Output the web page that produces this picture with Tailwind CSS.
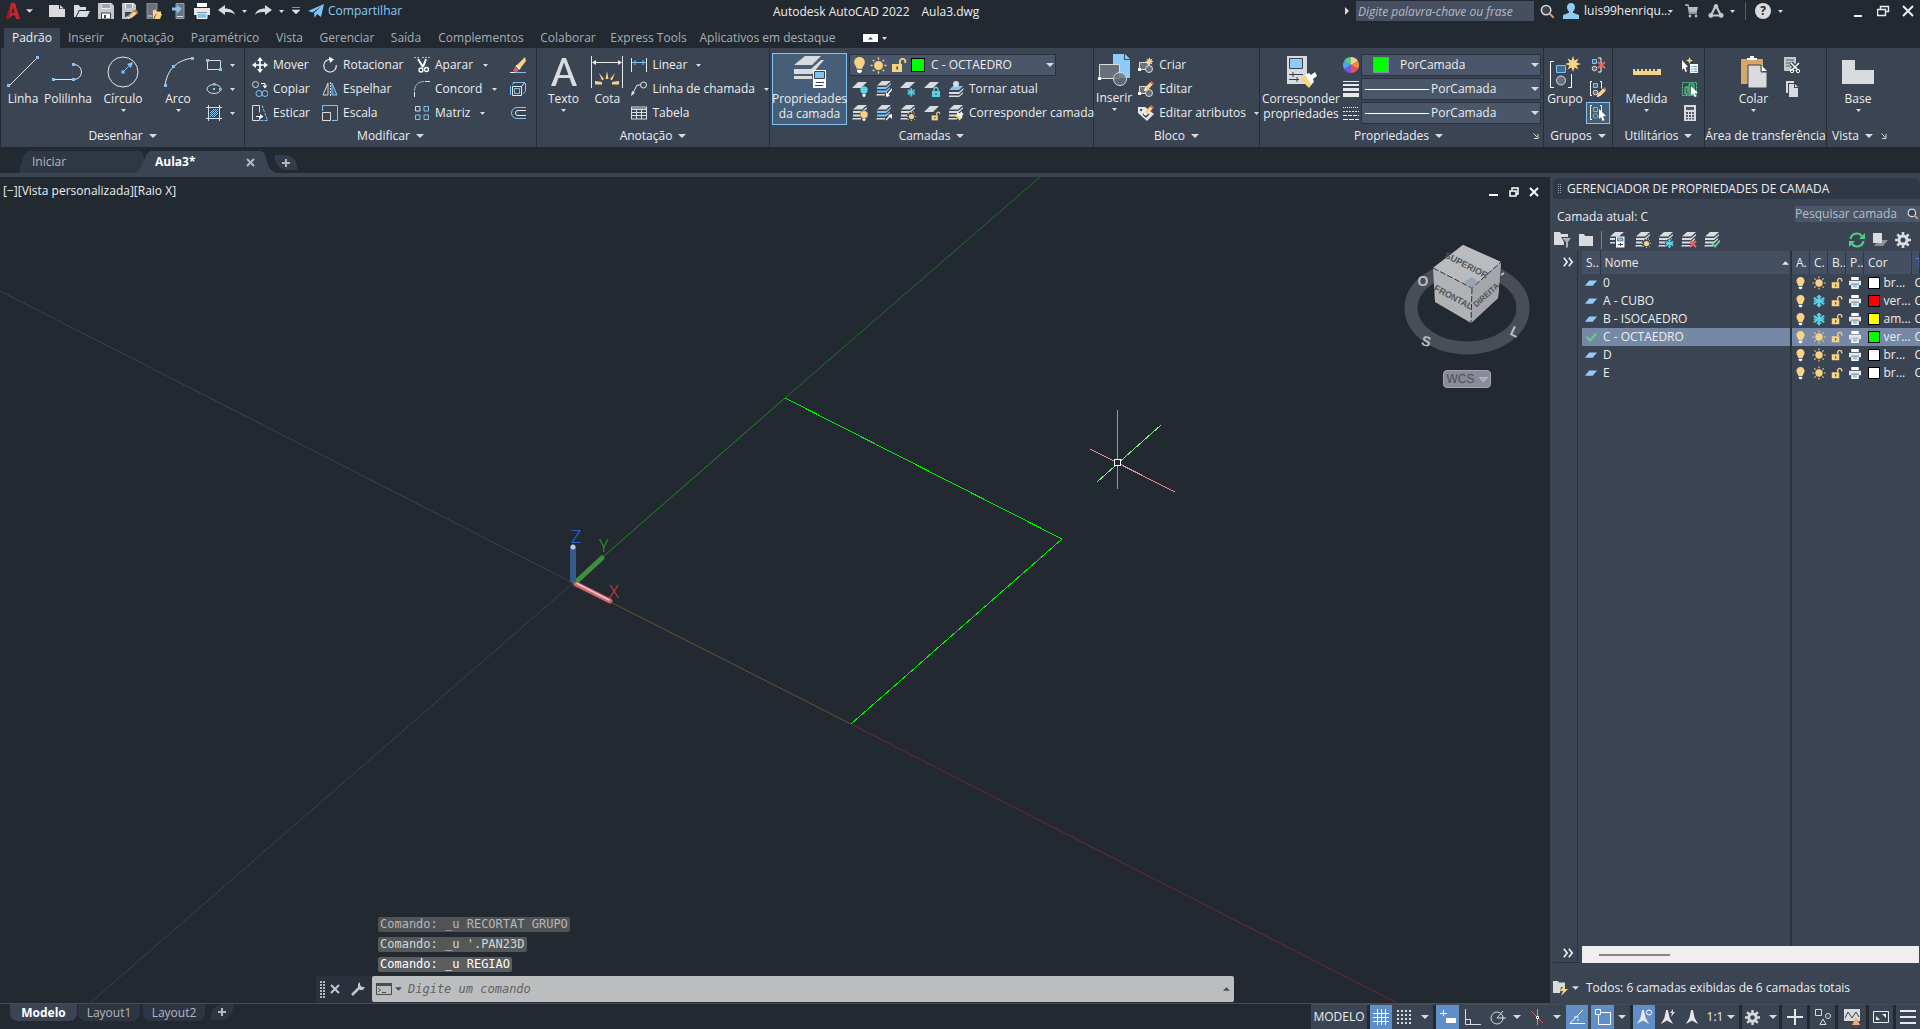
<!DOCTYPE html>
<html lang="pt-BR">
<head>
<meta charset="utf-8">
<title>Autodesk AutoCAD 2022 - Aula3.dwg</title>
<script src="https://cdn.jsdelivr.net/npm/@tailwindcss/browser@4"></script>
</head>
<body class="flex h-screen flex-col overflow-hidden bg-[#222931] font-['Open_Sans','Noto_Sans',sans-serif] text-xs whitespace-nowrap text-[#eceef0]">

<!-- Icon library -->
<svg class="hidden" aria-hidden="true">
  <defs>
    <symbol id="dn" viewBox="0 0 5 3"><path d="M0 0h5L2.500 3z" fill="#d9dbde"/></symbol>
    <symbol id="dnl" viewBox="0 0 8 4"><path d="M0 0h8L4 4z" fill="#d9dbde"/></symbol>
    <symbol id="launch" viewBox="0 0 6 6"><path d="M.5 .5l4 4M5 1v4.500H1" fill="none" stroke="#d9dbde"/></symbol>

    <symbol id="new" viewBox="0 0 17 16"><path d="M1 2h10v4h6v8H1z" fill="#d9dbde"/><path d="M12 2l4 3.500h-4z" fill="#d9dbde"/></symbol>
    <symbol id="open" viewBox="0 0 17 16"><path d="M1 14V2h5l1 2h6v3H6L2.500 14zM6.500 8H17l-3 6H3.500z" fill="#d9dbde"/></symbol>
    <symbol id="save" viewBox="0 0 16 16"><path d="M0 0h13.500L16 2.500V16H0z" fill="#c4c6c9"/><path d="M3.500 0h9v6h-9z" fill="#eceef0"/><path d="M4 2h8M4 4h8" stroke="#596270"/><path d="M3.500 10h9v6h-9z" fill="#fff" stroke="#39414e"/><path d="M6 12h2v3H6z" fill="#39414e"/></symbol>
    <symbol id="saveas" viewBox="0 0 16 16"><path d="M0 0h12l2 2v6l-8 8H0z" fill="#c4c6c9"/><path d="M3 0h8v5H3z" fill="#eceef0"/><path d="M4 2h6M4 4h6" stroke="#596270"/><path d="M3 9h6v1l-5 4H3z" fill="#39414e"/><path d="M6 16l1-4 6-5 3 3-6 5z" fill="#f8d384" stroke="#39414e" stroke-width=".7"/><path d="M12 8l3 3 1.500-2-2.500-2.500z" fill="#e0605e"/><path d="M5.500 16l1-2.500 1.500 2z" fill="#fff"/></symbol>
    <symbol id="openweb" viewBox="0 0 16 16"><path d="M1 0h10v7H7v9H1z" fill="#6b727d" stroke="#8d939b"/><path d="M2 13h4" stroke="#ddd"/><path d="M7 16V7h3l1 1.500h4V11h-5zM10.500 11H16l-2 5H8z" fill="#f8d384"/></symbol>
    <symbol id="saveweb" viewBox="0 0 16 16"><path d="M6 .5h8v15H6z" fill="#6b727d" stroke="#9a9fa6"/><path d="M7 13.500h6" stroke="#ddd"/><path d="M2 4.500h5V1.500L12 6l-5 4.500v-3H2z" fill="#7fc4f5"/></symbol>
    <symbol id="print" viewBox="0 0 16 16"><path d="M3 0h10v4H3z" fill="#fff"/><path d="M0 5h16v7h-3V9H3v3H0z" fill="#e6e8ea"/><path d="M3 10h10v5.500H3z" fill="#7fc4f5" stroke="#fff"/></symbol>
    <symbol id="undo" viewBox="0 0 17 12"><path d="M0 5L7 0v3.500c5 0 9 2 10 6.500-2.500-3-6-3-10-3V10z" fill="#d9dbde"/></symbol>
    <symbol id="plane" viewBox="0 0 16 16"><path d="M0 8L16 1l-3 13-4-3-2.500 4L6 10l7-6.500L4.500 9.500z" fill="#7fc4f5"/></symbol>
    <symbol id="mag" viewBox="0 0 16 16"><circle cx="6.500" cy="6.500" r="5" fill="#3a434f" stroke="#d9dbde" stroke-width="1.600"/><path d="M10.500 10.500l4 4" stroke="#e0a875" stroke-width="2"/></symbol>
    <symbol id="user" viewBox="0 0 16 16"><path d="M8 0c2.600 0 4 1.800 4 4 0 2-.8 3.500-2 4.500v1.200L16 12v4H0v-4l6-2.300V8.500C4.800 7.500 4 6 4 4c0-2.200 1.400-4 4-4z" fill="#8fcbf7"/></symbol>
    <symbol id="cart" viewBox="0 0 14 14"><path d="M0 1h3l1.500 8H12" fill="none" stroke="#b9bcc0" stroke-width="1.300"/><path d="M3.500 3H13l-1.300 5H4.500z" fill="#b9bcc0"/><circle cx="5" cy="12" r="1.400" fill="#b9bcc0"/><circle cx="11" cy="12" r="1.400" fill="#b9bcc0"/></symbol>
    <symbol id="apps" viewBox="0 0 16 14"><path d="M7.800 1.500L3 11.500l10 0z" fill="none" stroke="#c4c6c9" stroke-width="2.200"/><circle cx="8" cy="2.500" r="2.300" fill="#c4c6c9"/><circle cx="2.800" cy="11.500" r="2.400" fill="#c4c6c9"/><circle cx="13.200" cy="11.500" r="2.400" fill="#c4c6c9"/></symbol>

    <symbol id="move" viewBox="0 0 16 16"><path d="M8 2v12M2 8h12" stroke="#fff" stroke-width="1.600"/><path d="M8 0l3 4H5zM8 16l3-4H5zM0 8l4-3v6zM16 8l-4-3v6z" fill="#fff"/></symbol>
    <symbol id="copy" viewBox="0 0 16 16"><g fill="none"><circle cx="3.500" cy="3.500" r="3" stroke="#d9dbde"/><circle cx="7" cy="12.500" r="3" stroke="#7fc4f5"/><circle cx="13" cy="12.500" r="3" stroke="#7fc4f5"/><path d="M9 2.500h4v3" stroke="#fff"/></g><path d="M10.500 4.500h5L13 7.500z" fill="#fff"/></symbol>
    <symbol id="stretch" viewBox="0 0 16 16"><path d="M.5 .5h7v7M7.500 11v4.500h-7V.5" fill="none" stroke="#d9dbde"/><path d="M10 .5l5.500 15H8" fill="none" stroke="#7fc4f5" stroke-dasharray="3 1"/><path d="M4 11.500h4" stroke="#fff"/><path d="M8 9l3.500 2.500L8 14z" fill="#fff"/></symbol>
    <symbol id="rotate" viewBox="0 0 16 16"><path d="M9 2.500a6.300 6.300 0 1 0 5.300 5.500" fill="none" stroke="#e8eaec" stroke-width="1.200"/><path d="M7 -.5l5 3-4 3.500z" fill="#fff"/></symbol>
    <symbol id="mirror" viewBox="0 0 16 16"><path d="M6 2v12H1z" fill="none" stroke="#d9dbde"/><path d="M8.500 1v14" stroke="#d9dbde" stroke-dasharray="2 1"/><path d="M10 2l5 12h-5z" fill="#3f6b91" stroke="#7fc4f5"/></symbol>
    <symbol id="scale" viewBox="0 0 16 16"><path d="M.5 6V.5h15v15H10" fill="none" stroke="#7fc4f5"/><path d="M.5 7.500h8v8h-8z" fill="none" stroke="#d9dbde"/></symbol>
    <symbol id="trim" viewBox="0 0 16 16"><path d="M0 .5h6M8 .5h8" stroke="#7fc4f5" stroke-dasharray="2 1"/><path d="M4 2l5 8M12 2l-3 8" stroke="#fff" stroke-width="2"/><circle cx="7" cy="13" r="2" fill="none" stroke="#fff" stroke-width="1.300"/><circle cx="12.500" cy="12.500" r="2" fill="none" stroke="#fff" stroke-width="1.300"/></symbol>
    <symbol id="fillet" viewBox="0 0 16 16"><path d="M.5 16v-5M11 .5h5" stroke="#e8eaec"/><path d="M.5 10C.5 4 5 .5 10 .5" fill="none" stroke="#7fc4f5"/></symbol>
    <symbol id="array" viewBox="0 0 16 16"><g fill="none" stroke="#7fc4f5"><path d="M10 1.500h4.500V6H10zM1.500 10H6v4.500H1.500zM10 10h4.500v4.500H10z"/><path d="M1.500 1.500H6V6H1.500z" stroke="#d9dbde"/></g></symbol>
    <symbol id="erase" viewBox="0 0 16 16"><path d="M0 15.500h5" stroke="#e8eaec"/><path d="M5 15.500h11" stroke="#7fc4f5"/><path d="M6 9l9-9 1 4-7 9z" fill="#f8d384"/><path d="M5 9.500l4 3.500-2 2-4-.5z" fill="#e0605e"/><path d="M6 8.500l4 3.500" stroke="#fff" stroke-width="1.500"/></symbol>
    <symbol id="explode" viewBox="0 0 16 16"><g fill="none" stroke="#7fc4f5"><path d="M.5 14V5M3 1.500h12M15.500 2v8L13 13M2 3.500L5 1"/><path d="M2.500 5.500h9v9h-9zM11.500 5.500l3-3.500" stroke="#e8eaec"/><path d="M4.500 7.500h5v5h-5z"/></g></symbol>
    <symbol id="offset" viewBox="0 0 16 16"><path d="M16 2.500H7a5.500 5.500 0 0 0 0 11h9" fill="none" stroke="#7fc4f5"/><path d="M16 5.500H8a2.500 2.500 0 0 0 0 5h8" fill="none" stroke="#e8eaec"/></symbol>

    <symbol id="rect" viewBox="0 0 16 16"><path d="M1.500 3.500h13v9h-13z" fill="none" stroke="#d9dbde"/><path d="M0 2h3v3H0zM13 11h3v3h-3z" fill="#7fc4f5"/></symbol>
    <symbol id="ellipse" viewBox="0 0 16 16"><ellipse cx="8" cy="8" rx="7" ry="4.500" fill="none" stroke="#d9dbde"/><path d="M7 2h2.500v2.500H7zM13 7h2.500v2.500H13zM7 7h2v2H7z" fill="#7fc4f5"/></symbol>
    <symbol id="hatch" viewBox="0 0 16 16"><path d="M2.500 0v16M13.500 0v16M0 2.500h16M0 13.500h16" stroke="#d9dbde"/><path d="M4 8l4-4M4 12l8-8M8 12l4-4M4 10l6-6M6 12l6-6" stroke="#7fc4f5"/></symbol>

    <symbol id="linear" viewBox="0 0 16 16"><path d="M.5 1v14M15.500 1v14" stroke="#e8eaec"/><path d="M1 5.500h14M4 3v5M12 3v5" stroke="#7fc4f5"/></symbol>
    <symbol id="leader" viewBox="0 0 16 16"><circle cx="12.500" cy="4" r="3" fill="none" stroke="#e8eaec"/><path d="M9.500 4H6L2 12" fill="none" stroke="#e8eaec"/><path d="M0 15l1-5 3 2z" fill="#e8eaec"/></symbol>
    <symbol id="tbl" viewBox="0 0 16 16"><path d="M0 1.500h16v13H0z" fill="#d9dbde"/><path d="M1 5h4v2H1zM6 5h4v2H6zM11 5h4v2h-4zM1 8h4v2H1zM6 8h4v2H6zM11 8h4v2h-4zM1 11h4v2.500H1zM6 11h4v2.500H6zM11 11h4v2.500h-4zM1 2.500h14v1H1z" fill="#3b4453"/></symbol>

    <symbol id="bulb" viewBox="0 0 16 16"><path d="M8 0c3 0 5 2.200 5 5 0 2.400-2 3.800-2.500 6h-5C5 8.800 3 7.400 3 5c0-2.800 2-5 5-5z" fill="#f8d384"/><path d="M5.800 12h4.400v1.500L9 15H7l-1.200-1.500z" fill="#fff"/></symbol>
    <symbol id="sun" viewBox="0 0 16 16"><circle cx="8" cy="8" r="4.200" fill="#f8d384"/><path d="M8 .5v2M8 13.500v2M.5 8h2M13.500 8h2M2.700 2.700l1.400 1.400M11.900 11.900l1.400 1.400M2.700 13.300l1.400-1.400M11.900 4.100l1.400-1.400" stroke="#f8d384" stroke-width="1.300"/></symbol>
    <symbol id="unlock" viewBox="0 0 16 16"><path d="M1 7h10v8H1z" fill="#f8d384"/><path d="M9 7V4a2.700 2.700 0 0 1 5.300 0v2" fill="none" stroke="#f8d384" stroke-width="1.800"/><path d="M5.500 9.500h1.500v3H5.500z" fill="#39414e"/></symbol>
    <symbol id="snow" viewBox="0 0 16 16"><path d="M8 1v14M2 4.500l12 7M14 4.500l-12 7" stroke="#5cd3e6" stroke-width="2.200"/><path d="M5.500 2.500L8 5l2.500-2.500M5.500 13.500L8 11l2.500 2.500M2 8h12" fill="none" stroke="#5cd3e6" stroke-width="1.500"/></symbol>
    <symbol id="prn" viewBox="0 0 16 16"><path d="M3 0h10v4H3z" fill="#fff"/><path d="M0 5h16v6h-3V9H3v2H0z" fill="#e6e8ea"/><path d="M3 10h10v6H3z" fill="#fff"/><path d="M5 11h6v3H5z" fill="#7fc4f5"/></symbol>
    <symbol id="chip" viewBox="0 0 16 16"><path d="M6 5h9l-5 6H1z" fill="#8fcbf7"/></symbol>
    <symbol id="tick" viewBox="0 0 16 16"><path d="M3 8l4 4 7-8" fill="none" stroke="#5fd08f" stroke-width="2.400"/></symbol>

    <symbol id="one" viewBox="0 0 16 16"><path d="M6 1h9l-6 6H0z" fill="#d9dbde"/></symbol>
    <symbol id="stk" viewBox="0 0 16 16"><path d="M6 0h9l-5 4.500H1zM1 6h9l5-4v1.500L10 8H1zM1 9.500h9l4-3.500v1.500L10 11.500H1zM1 13h8v1.500H0z" fill="#d9dbde"/></symbol>
    <symbol id="stkb" viewBox="0 0 16 16"><path d="M6 0h9l-5 4.500H1z" fill="#d9dbde"/><path d="M1 6h9l5-4v1.500L10 8H1zM1 9.500h9l4-3.500v1.500L10 11.500H1z" fill="#7fc4f5"/><path d="M1 13h8v1.500H0z" fill="#d9dbde"/></symbol>
    <symbol id="lofreeze" viewBox="0 0 16 16"><use href="#one"/><use href="#snow" x="6.500" y="6.500" width="9.500" height="9.500"/></symbol>
    <symbol id="looff" viewBox="0 0 16 16"><use href="#one"/><circle cx="12" cy="9" r="3.700" fill="#5cd3e6"/><path d="M10.500 13h3v2l-1 1h-1l-1-1z" fill="#fff"/></symbol>
    <symbol id="lolock" viewBox="0 0 16 16"><use href="#one"/><path d="M8 10h8v6H8z" fill="#5cd3e6"/><path d="M10 10V8.500a2 2 0 0 1 4 0V10" fill="none" stroke="#5cd3e6" stroke-width="1.300"/><path d="M11.500 12h1v2h-1z" fill="#234"/></symbol>
    <symbol id="loiso" viewBox="0 0 16 16"><use href="#stkb"/><path d="M16 8l-4 5" stroke="#fff" stroke-width="1.300"/><path d="M10 16v-5l4 4z" fill="#fff"/></symbol>
    <symbol id="louniso" viewBox="0 0 16 16"><use href="#stkb"/><path d="M10 15l4-4" stroke="#fff" stroke-width="1.300"/><path d="M16 9v5l-4-4z" fill="#fff"/></symbol>
    <symbol id="loon" viewBox="0 0 16 16"><use href="#stk"/><circle cx="12" cy="9.500" r="4" fill="#f8d384" stroke="#3b4453" stroke-width=".5"/><path d="M10.500 13.500h3v1.500l-1 1h-1l-1-1z" fill="#fff"/></symbol>
    <symbol id="lothaw" viewBox="0 0 16 16"><use href="#stk"/><circle cx="11.500" cy="11.500" r="4.500" fill="#3b4453"/><use href="#sun" x="6.500" y="6.500" width="10" height="10"/></symbol>
    <symbol id="lounlock" viewBox="0 0 16 16"><use href="#one"/><use href="#unlock" x="7" y="6" width="10" height="10"/></symbol>
    <symbol id="lomake" viewBox="0 0 16 16"><path d="M5 5h10l-4 4H1z" fill="#7fc4f5"/><circle cx="8" cy="3" r="3" fill="#d9dbde"/><path d="M1 11h10l4.500-4v1.500L11 13H1zM1 14.500h10l4-3.500v1.500L11 16H1z" fill="#d9dbde"/></symbol>
    <symbol id="brush" viewBox="0 0 16 16"><path d="M0 6l5-4 7 9-4 4z" fill="#f8d384"/><path d="M3 3l3-2 2 2 4-3 3 4-3 3 2 2-3 2z" fill="#fff"/></symbol>
    <symbol id="lomatch" viewBox="0 0 16 16"><use href="#stk"/><use href="#brush" x="7" y="7" width="9" height="9"/></symbol>
    <symbol id="lodel" viewBox="0 0 16 16"><use href="#stk"/><path d="M9 9l6 6M15 9l-6 6" stroke="#ef6461" stroke-width="2"/></symbol>
    <symbol id="loset" viewBox="0 0 16 16"><use href="#stk"/><path d="M8 11.500l3 3 5-6" fill="none" stroke="#5fd08f" stroke-width="2"/></symbol>
    <symbol id="losnow" viewBox="0 0 16 16"><use href="#stk"/><circle cx="11.500" cy="11.500" r="4.500" fill="#3b4453"/><use href="#snow" x="6.500" y="6.500" width="10" height="10"/></symbol>
    <symbol id="lostate" viewBox="0 0 16 16"><path d="M6 0h9l-5 4.500H1zM1 6h5v2H1zM1 10h5v1.500H1z" fill="#d9dbde"/><path d="M7 4.500h8.500v11H7z" fill="#fff"/><path d="M8.500 6h5.500v3H8.500z" fill="#7fc4f5" stroke="#39414e" stroke-width=".6"/><path d="M9 12.500h5M11.500 11v3" stroke="#39414e"/></symbol>

    <symbol id="blk" viewBox="0 0 16 16"><path d="M1.500 5.500h9v7h-9z" fill="#69707c" stroke="#d9dbde"/><circle cx="11" cy="12" r="3.500" fill="#69707c" stroke="#d9dbde"/><path d="M0 11h3v3H0z" fill="#fff"/></symbol>
    <symbol id="star" viewBox="0 0 16 16"><path d="M8 0l1.500 4.500L13.500 2.500 11.500 6.500 16 8l-4.500 1.500 2 4-4-2L8 16l-1.500-4.500-4 2 2-4L0 8l4.500-1.500-2-4 4 2z" fill="#f8d384"/></symbol>
    <symbol id="pen" viewBox="0 0 16 16"><path d="M0 16l2-6 8-8 4 4-8 8z" fill="#f8d384"/><path d="M10 2l2-2 4 4-2 2z" fill="#e0605e"/><path d="M0 16l1.500-4.500 3 3z" fill="#fff"/></symbol>
    <symbol id="bcreate" viewBox="0 0 16 16"><use href="#blk"/><use href="#star" x="7" y="0" width="9" height="9"/></symbol>
    <symbol id="bedit" viewBox="0 0 16 16"><use href="#blk"/><use href="#pen" x="6" y="0" width="10" height="10"/></symbol>
    <symbol id="battr" viewBox="0 0 16 16"><path d="M0 2h7l9 7-7 7L0 8z" fill="#e6e8ea"/><circle cx="3" cy="5" r="1.200" fill="#3b4453"/><path d="M5 9l3 3 3-3" fill="none" stroke="#3b4453" stroke-width="1.500"/><use href="#pen" x="6" y="0" width="10" height="10"/></symbol>

    <symbol id="wheel" viewBox="0 0 16 16"><path d="M8 8V0a8 8 0 0 1 6.900 4z" fill="#f8d384"/><path d="M8 8l6.900-4a8 8 0 0 1 0 8z" fill="#f58a4b"/><path d="M8 8l6.900 4A8 8 0 0 1 8 16z" fill="#e8504f"/><path d="M8 8v8a8 8 0 0 1-6.900-4z" fill="#7d4fe0"/><path d="M8 8l-6.900 4a8 8 0 0 1 0-8z" fill="#4fa3ef"/><path d="M8 8L1.100 4A8 8 0 0 1 8 0z" fill="#5cc98c"/></symbol>
    <symbol id="lw" viewBox="0 0 16 16"><path d="M0 .5h16" stroke="#e6e8ea"/><path d="M0 4h16" stroke="#e6e8ea" stroke-width="2"/><path d="M0 8.500h16" stroke="#e6e8ea" stroke-width="3"/><path d="M0 14h16" stroke="#e6e8ea" stroke-width="4"/></symbol>
    <symbol id="lt" viewBox="0 0 16 16"><g stroke="#e6e8ea"><path d="M0 2.500h16" stroke-dasharray="1 1"/><path d="M0 6.500h16" stroke-dasharray="2 1"/><path d="M0 10.500h16" stroke-dasharray="4 1"/><path d="M0 14.500h16" stroke-dasharray="5 1"/></g></symbol>

    <symbol id="grp" viewBox="0 0 16 16"><path d="M2.500 2.500h4v4h-4z" fill="#3f6b91" stroke="#7fc4f5"/><circle cx="4.500" cy="11.500" r="2.300" fill="#69707c" stroke="#d9dbde"/></symbol>
    <symbol id="ungrp" viewBox="0 0 16 16"><use href="#grp"/><path d="M8 1h3v14H8" fill="none" stroke="#fff"/><path d="M8 5l7 6M15 5l-7 6" stroke="#ef6461" stroke-width="2"/></symbol>
    <symbol id="gedit" viewBox="0 0 16 16"><path d="M2 .5H.5v14H2M10 .5h1.500v7" fill="none" stroke="#fff"/><use href="#grp" x="1"/><use href="#pen" x="7" y="6" width="10" height="10"/></symbol>
    <symbol id="gsel" viewBox="0 0 16 16"><path d="M2 .5H.5v14H2M10 .5h1.500v7" fill="none" stroke="#fff"/><path d="M3.500 2.500h4v4h-4z" fill="none" stroke="#5fd08f"/><circle cx="5.500" cy="11" r="2.300" fill="none" stroke="#5fd08f"/><path d="M9 4l7 7-3 .3 1.500 4-2 .7-1.500-4L9 14z" fill="#fff"/></symbol>
    <symbol id="qsel" viewBox="0 0 16 16"><path d="M7.500 0l1 2.500L11 3.500l-2.500 1-1 2.500-1-2.500L4 3.500l2.500-1z" fill="#f8d384"/><path d="M8 7h8v9H8z" fill="#fff"/><path d="M9 9.500h1.500M9 12h1.500M9 14.300h1.500M11.500 9.500h3.500M11.500 12h3.500M11.500 14.300h3.500" stroke="#4b93cf"/><path d="M0 3l6 7-2.500.3 1.500 4-1.600.6-1.500-4L0 13z" fill="#fff"/></symbol>
    <symbol id="selall" viewBox="0 0 16 16"><path d="M.5 1.500h14v13H.5z" fill="none" stroke="#5fd08f" stroke-dasharray="2 1"/><path d="M3 6h3v5h5v2H3zM7 3h5v6H7z" fill="#2c7550" stroke="#5fd08f"/><path d="M9 5l7 7-3 .3 1.500 3.200-2 .5-1.500-3.500L9 14.500z" fill="#fff"/></symbol>
    <symbol id="calc" viewBox="0 0 16 16"><path d="M2 0h12v16H2z" fill="#d9dbde"/><path d="M4 2h8v3H4zM4 7h2v2H4zM7 7h2v2H7zM10 7h2v2h-2zM4 10h2v2H4zM7 10h2v2H7zM10 10h2v2h-2zM4 13h2v1.500H4zM7 13h2v1.500H7zM10 13h2v1.500h-2z" fill="#4d5664"/></symbol>
    <symbol id="cut" viewBox="0 0 16 16"><path d="M0 0h12v14H0z" fill="#c4c6c9"/><path d="M2 3h8M2 6h8M2 9h4" stroke="#4d5664"/><path d="M7 6l7 7M15 6l-7 7" stroke="#3b4453" stroke-width="4"/><path d="M7 6l7 7M15 6l-7 7" stroke="#fff" stroke-width="1.500"/><circle cx="8" cy="14" r="1.700" fill="none" stroke="#fff"/><circle cx="14" cy="14" r="1.700" fill="none" stroke="#fff"/></symbol>
    <symbol id="copyc" viewBox="0 0 16 16"><path d="M2 0h8v2H4v10H2z" fill="#d9dbde"/><path d="M5 3h5v4h4v9H5z" fill="#d9dbde"/><path d="M11 3l3 3h-3z" fill="#d9dbde"/></symbol>

    <symbol id="gear" viewBox="0 0 16 16"><circle cx="8" cy="8" r="4" fill="none" stroke="#d9dbde" stroke-width="3"/><path d="M8 0v3M8 13v3M0 8h3M13 8h3M2.300 2.300l2.200 2.200M11.500 11.500l2.200 2.200M2.300 13.700l2.200-2.200M11.500 4.500l2.200-2.200" stroke="#d9dbde" stroke-width="2.600"/></symbol>
    <symbol id="folder" viewBox="0 0 16 16"><path d="M1 2h5l1 2h8v10H1z" fill="#d9dbde"/></symbol>
    <symbol id="ffilter" viewBox="0 0 17 16"><path d="M0 0h6l1 2h7v3H7l3 5v3H0z" fill="#d9dbde"/><path d="M8 6h9l-3 4v5l-2 1v-6z" fill="#aeb1b6"/></symbol>
    <symbol id="refresh" viewBox="0 0 16 16"><path d="M1.500 7A6.500 6.500 0 0 1 13 4M14.500 9A6.500 6.500 0 0 1 3 12" fill="none" stroke="#4fcf86" stroke-width="2.200"/><path d="M16 1v6h-6zM0 15V9h6z" fill="#4fcf86"/></symbol>
    <symbol id="apply" viewBox="0 0 16 16"><path d="M7 8h9l-5 6H2z" fill="#8b919b"/><path d="M1 1h9v10H1z" fill="#d9dbde"/></symbol>
    <symbol id="chev" viewBox="0 0 12 12"><path d="M1 1l4 5-4 5M7 1l4 5-4 5" fill="none" stroke="#eceef0" stroke-width="2"/></symbol>

    <symbol id="anno" viewBox="0 0 16 16"><path d="M7 0h2l2 9 4 7-7-4-7 4 4-7z" fill="#e6e8ea"/></symbol>
  </defs>
</svg>

<!-- Title bar -->
<header class="flex h-7 shrink-0 pb-[6px]">
  <nav class="flex w-2/5 items-center gap-2 pl-[6px]" aria-label="Acesso rápido">
    <button class="flex items-center gap-[6px]" aria-label="Menu do aplicativo">
      <svg class="h-4 w-[14px]" viewBox="0 0 14 16"><path d="M5 0h4l5 16h-4l-1-3.500H6L3 16H0z" fill="#c9252d"/><path d="M7 4l1.500 5.500L5.500 10z" fill="#222931"/><path d="M5 0L0 16h3z" fill="#8f1a20"/></svg>
      <svg class="h-1 w-[7px]"><use href="#dnl"/></svg></button>
    <button class="ml-[7px]" aria-label="Novo"><svg class="h-4 w-[17px]"><use href="#new"/></svg></button>
    <button aria-label="Abrir"><svg class="h-4 w-[17px]"><use href="#open"/></svg></button>
    <button aria-label="Salvar"><svg class="size-4"><use href="#save"/></svg></button>
    <button aria-label="Salvar como"><svg class="size-4"><use href="#saveas"/></svg></button>
    <button aria-label="Abrir da Web"><svg class="size-4"><use href="#openweb"/></svg></button>
    <button aria-label="Salvar na Web"><svg class="size-4"><use href="#saveweb"/></svg></button>
    <button aria-label="Plotar"><svg class="size-4"><use href="#print"/></svg></button>
    <button class="flex items-center gap-[7px]" aria-label="Desfazer"><svg class="h-3 w-[17px]"><use href="#undo"/></svg><svg class="h-[3px] w-[5px]"><use href="#dn"/></svg></button>
    <button class="flex items-center gap-[7px]" aria-label="Refazer"><svg class="h-3 w-[17px] -scale-x-100"><use href="#undo"/></svg><svg class="h-[3px] w-[5px]"><use href="#dn"/></svg></button>
    <button aria-label="Personalizar"><svg class="h-2 w-2" viewBox="0 0 8 8"><path d="M0 .5h8M0 3h8L4 7z" fill="#d9dbde" stroke="#d9dbde" stroke-width=".6"/></svg></button>
    <a href="#" class="flex items-center gap-1 text-[#8fcbf7]"><svg class="size-4"><use href="#plane"/></svg>Compartilhar</a>
  </nav>
  <h1 class="pt-1 pl-[5px]"><span>Autodesk AutoCAD 2022</span><span class="ml-3">Aula3.dwg</span></h1>
  <div class="ml-auto flex items-center pr-[6px]">
    <svg class="mr-[7px] h-2 w-1" viewBox="0 0 4 8"><path d="M0 0v8l4-4z" fill="#d9dbde"/></svg>
    <input class="h-5 w-[178px] bg-[#464f61] px-[2px] text-xs italic placeholder:text-[#b5bac2]" aria-label="Pesquisar ajuda" placeholder="Digite palavra-chave ou frase">
    <svg class="ml-[6px] size-[15px]"><use href="#mag"/></svg>
    <button class="ml-2 flex items-center"><svg class="mr-[5px] size-4"><use href="#user"/></svg><span class="w-[84px] text-left">luis99henriqu...</span><svg class="h-[3px] w-[5px]"><use href="#dn"/></svg></button>
    <button class="ml-3" aria-label="Loja"><svg class="size-[14px]"><use href="#cart"/></svg></button>
    <button class="ml-[9px] flex items-center gap-[6px]" aria-label="Aplicativos"><svg class="h-[14px] w-4"><use href="#apps"/></svg><svg class="h-[3px] w-[5px]"><use href="#dn"/></svg></button>
    <span class="ml-[10px] h-[18px] w-px bg-[#565d68]"></span>
    <button class="ml-[9px] flex items-center gap-[7px]" aria-label="Ajuda"><span class="flex size-4 items-center justify-center rounded-full bg-[#d9dbde] font-bold text-[#222931]">?</span><svg class="h-[3px] w-[5px]"><use href="#dn"/></svg></button>
    <button class="ml-[71px]" aria-label="Minimizar"><svg class="h-3 w-2" viewBox="0 0 8 12"><path d="M0 11h8" stroke="#eee" stroke-width="2"/></svg></button>
    <button class="ml-[15px]" aria-label="Restaurar"><svg class="h-3 w-[13px]" viewBox="0 0 13 12"><path d="M3.500 4V1.500h8v5H9M.5 4.500h8v6h-8z" fill="none" stroke="#eee" stroke-width="1.400"/></svg></button>
    <button class="ml-3" aria-label="Fechar"><svg class="size-3" viewBox="0 0 12 12"><path d="M1 1l10 10M11 1L1 11" stroke="#eee" stroke-width="2"/></svg></button>
  </div>
</header>

<!-- Ribbon tabs -->
<nav class="flex h-5 shrink-0 items-center pl-1 text-[#a9aeb5]" aria-label="Faixa de opções">
  <a href="#" class="flex h-5 w-14 items-center justify-center bg-[#3b4453] text-[#eceef0]">Padrão</a>
  <a href="#" class="w-[52px] text-center">Inserir</a>
  <a href="#" class="w-[71px] text-center">Anotação</a>
  <a href="#" class="w-[84px] text-center">Paramétrico</a>
  <a href="#" class="w-[45px] text-center">Vista</a>
  <a href="#" class="w-[70px] text-center">Gerenciar</a>
  <a href="#" class="w-[48px] text-center">Saída</a>
  <a href="#" class="w-[102px] text-center">Complementos</a>
  <a href="#" class="w-[72px] text-center">Colaborar</a>
  <a href="#" class="w-[89px] text-center">Express Tools</a>
  <a href="#" class="w-[149px] text-center">Aplicativos em destaque</a>
  <button class="ml-[21px] flex items-center gap-1" aria-label="Minimizar faixa"><svg class="h-2 w-[15px]" viewBox="0 0 15 8"><path d="M0 0h15v8H0z" fill="#fff"/><path d="M5 5.500h5L7.500 3z" fill="#39414e"/></svg><svg class="h-[3px] w-[5px]"><use href="#dn"/></svg></button>
</nav>

<!-- Ribbon -->
<main class="contents">
<div class="flex h-[99px] shrink-0 border-l border-[#222931] bg-[#3b4453]">
  <!-- Desenhar -->
  <section class="flex w-[244px] flex-col border-r border-[#252c36] pt-[5px]">
    <div class="flex h-[72px]">
      <button class="flex w-[44px] flex-col items-center pt-[3px]"><svg class="size-8 shrink-0" viewBox="0 0 32 32"><path d="M2 30L30 2" stroke="#e6e8ea"/><path d="M0 28h3v3H0zM29 0h3v3h-3z" fill="#7fc4f5"/></svg><span class="mt-[3px]">Linha</span></button>
      <button class="flex w-[46px] flex-col items-center pt-[3px]"><svg class="size-8 shrink-0" viewBox="0 0 32 32"><path d="M2 23.500h20a7.500 7.500 0 0 0 0-15" fill="none" stroke="#e6e8ea"/><path d="M0 22h3v3H0zM20 22h3v3h-3zM20 7h3v3h-3z" fill="#7fc4f5"/></svg><span class="mt-[3px]">Polilinha</span></button>
      <button class="flex w-[64px] flex-col items-center pt-[3px]"><svg class="size-8 shrink-0" viewBox="0 0 32 32"><circle cx="16" cy="16" r="15" fill="none" stroke="#e6e8ea"/><path d="M16 16l8-8" stroke="#7fc4f5"/><path d="M26 6l-2 6-4-4zM14.500 14.500h3v3h-3z" fill="#7fc4f5"/></svg><span class="mt-[3px]">Círculo</span><svg class="mt-[2px] h-[3px] w-[5px] shrink-0"><use href="#dn"/></svg></button>
      <button class="flex w-[46px] flex-col items-center pt-[3px]"><svg class="size-8 shrink-0" viewBox="0 0 32 32"><path d="M3 30C5 13 15 4 31 2" fill="none" stroke="#e6e8ea"/><path d="M2 28h3v3H2zM10 9h3v3h-3zM29 1h3v3h-3z" fill="#7fc4f5"/></svg><span class="mt-[3px]">Arco</span><svg class="mt-[2px] h-[3px] w-[5px] shrink-0"><use href="#dn"/></svg></button>
      <div class="grid grid-rows-3 pl-[5px]">
        <button class="flex items-center gap-2" aria-label="Retângulo"><svg class="size-4"><use href="#rect"/></svg><svg class="h-[3px] w-[5px]"><use href="#dn"/></svg></button>
        <button class="flex items-center gap-2" aria-label="Elipse"><svg class="size-4"><use href="#ellipse"/></svg><svg class="h-[3px] w-[5px]"><use href="#dn"/></svg></button>
        <button class="flex items-center gap-2" aria-label="Hachura"><svg class="size-4"><use href="#hatch"/></svg><svg class="h-[3px] w-[5px]"><use href="#dn"/></svg></button>
      </div>
    </div>
    <button class="flex h-[22px] items-center justify-center gap-[6px]">Desenhar<svg class="h-1 w-2"><use href="#dnl"/></svg></button>
  </section>

  <!-- Modificar -->
  <section class="flex w-[292px] flex-col border-r border-[#252c36] pt-[5px]">
    <div class="grid h-[72px] grid-cols-[70px_92px_96px_auto] grid-rows-3 pl-[7px]">
      <button class="flex items-center gap-[5px]"><svg class="size-4"><use href="#move"/></svg>Mover</button>
      <button class="flex items-center gap-[5px]"><svg class="size-4"><use href="#rotate"/></svg>Rotacionar</button>
      <button class="flex items-center gap-[5px]"><svg class="size-4"><use href="#trim"/></svg>Aparar<svg class="ml-[5px] h-[3px] w-[5px]"><use href="#dn"/></svg></button>
      <button class="flex items-center" aria-label="Apagar"><svg class="size-4"><use href="#erase"/></svg></button>
      <button class="flex items-center gap-[5px]"><svg class="size-4"><use href="#copy"/></svg>Copiar</button>
      <button class="flex items-center gap-[5px]"><svg class="size-4"><use href="#mirror"/></svg>Espelhar</button>
      <button class="flex items-center gap-[5px]"><svg class="size-4"><use href="#fillet"/></svg>Concord<svg class="ml-[5px] h-[3px] w-[5px]"><use href="#dn"/></svg></button>
      <button class="flex items-center" aria-label="Explodir"><svg class="size-4"><use href="#explode"/></svg></button>
      <button class="flex items-center gap-[5px]"><svg class="size-4"><use href="#stretch"/></svg>Esticar</button>
      <button class="flex items-center gap-[5px]"><svg class="size-4"><use href="#scale"/></svg>Escala</button>
      <button class="flex items-center gap-[5px]"><svg class="size-4"><use href="#array"/></svg>Matriz<svg class="ml-[5px] h-[3px] w-[5px]"><use href="#dn"/></svg></button>
      <button class="flex items-center" aria-label="Deslocamento"><svg class="size-4"><use href="#offset"/></svg></button>
    </div>
    <button class="flex h-[22px] items-center justify-center gap-[6px]">Modificar<svg class="h-1 w-2"><use href="#dnl"/></svg></button>
  </section>

  <!-- Anotação -->
  <section class="flex w-[233px] flex-col border-r border-[#252c36] pt-[5px]">
    <div class="flex h-[72px]">
      <button class="flex w-[54px] flex-col items-center pt-[3px]"><svg class="size-8 shrink-0" viewBox="0 0 32 32"><path d="M14 2h4l11 28h-4.500l-3-8h-11l-3 8H3zM16 6.500L11.500 19h9z" fill="#d9dbde"/></svg><span class="mt-[3px]">Texto</span><svg class="mt-[2px] h-[3px] w-[5px] shrink-0"><use href="#dn"/></svg></button>
      <button class="flex w-[35px] flex-col items-center pt-[3px]"><svg class="size-8 shrink-0" viewBox="0 0 32 32"><path d="M.5 0v32M31.500 0v32M2 6.500h28" stroke="#e6e8ea"/><path d="M1 6.500l4-2.500v5zM31 6.500L27 4v5z" fill="#e6e8ea"/><g fill="#f8d384"><path d="M16 15l1.500 8h-3zM8 17l5 6-2 1.500zM24 17l-5 6 2 1.500zM4 25l7 1v2.500H4zM28 25l-7 1v2.500h7z"/></g></svg><span class="mt-[3px]">Cota</span></button>
      <div class="grid grid-rows-3 pl-[7px]">
        <button class="flex items-center gap-[5px]"><svg class="size-4"><use href="#linear"/></svg>Linear<svg class="ml-1 h-[3px] w-[5px]"><use href="#dn"/></svg></button>
        <button class="flex items-center gap-[5px]"><svg class="size-4"><use href="#leader"/></svg>Linha de chamada<svg class="ml-1 h-[3px] w-[5px]"><use href="#dn"/></svg></button>
        <button class="flex items-center gap-[5px]"><svg class="size-4"><use href="#tbl"/></svg>Tabela</button>
      </div>
    </div>
    <button class="flex h-[22px] items-center justify-center gap-[6px]">Anotação<svg class="h-1 w-2"><use href="#dnl"/></svg></button>
  </section>

  <!-- Camadas -->
  <section class="flex w-[324px] flex-col border-r border-[#252c36] pt-[5px]">
    <div class="flex h-[72px] pl-[2px]">
      <button class="flex w-[75px] flex-col items-center border border-[#7fc4f5] bg-[#465e77] pt-[2px]"><svg class="size-8 shrink-0" viewBox="0 0 32 32"><path d="M11 0h16l-9 9H0zM0 13h17l10-9h-3l6 0-12 14H0zM0 20h18v3H0z" fill="#d9dbde"/><path d="M19 14h13v18H19z" fill="#fff"/><path d="M20.500 15.500h10v7h-10z" fill="#7fc4f5" stroke="#39414e"/><path d="M22 26.500h8M21 29.500h8" stroke="#39414e"/></svg><span class="mt-[3px] leading-[15px]">Propriedades<br>da camada</span></button>
      <div class="flex-1 pl-[2px]">
        <div class="relative mt-px h-[22px] w-[207px]">
          <select class="size-full appearance-none border border-[#2b323e] bg-[#4a566a] pl-[81px] text-xs" aria-label="Camada atual"><option>C - OCTAEDRO</option></select>
          <span class="pointer-events-none absolute inset-0 flex items-center px-[2px]"><svg class="size-[17px]"><use href="#bulb"/></svg><svg class="ml-[2px] size-[17px]"><use href="#sun"/></svg><svg class="ml-1 size-4"><use href="#unlock"/></svg><span class="ml-[4px] size-[14px] border border-black bg-[#00ff00]"></span><svg class="ml-auto h-1 w-2"><use href="#dnl"/></svg></span>
        </div>
        <div class="mt-px flex h-6 items-center gap-2 pl-[3px]">
          <svg class="size-4"><use href="#looff"/></svg><svg class="size-4"><use href="#loiso"/></svg><svg class="size-4"><use href="#lofreeze"/></svg><svg class="size-4"><use href="#lolock"/></svg>
          <button class="flex items-center gap-[5px]"><svg class="size-4"><use href="#lomake"/></svg>Tornar atual</button>
        </div>
        <div class="flex h-6 items-center gap-2 pl-[3px]">
          <svg class="size-4"><use href="#loon"/></svg><svg class="size-4"><use href="#louniso"/></svg><svg class="size-4"><use href="#lothaw"/></svg><svg class="size-4"><use href="#lounlock"/></svg>
          <button class="flex items-center gap-[5px]"><svg class="size-4"><use href="#lomatch"/></svg>Corresponder camada</button>
        </div>
      </div>
    </div>
    <button class="flex h-[22px] items-center justify-center gap-[6px]">Camadas<svg class="h-1 w-2"><use href="#dnl"/></svg></button>
  </section>

  <!-- Bloco -->
  <section class="flex w-[166px] flex-col border-r border-[#252c36] pt-[5px]">
    <div class="flex h-[72px]">
      <button class="flex w-[43px] flex-col items-center pt-px"><svg class="size-8 shrink-0" viewBox="0 0 32 32"><path d="M15 0h11v6h6v18H15z" fill="#8fcbf7"/><path d="M27 0l5 5h-5z" fill="#8fcbf7"/><path d="M1.500 10.500h20v14h-20z" fill="#69707c" stroke="#d9dbde"/><circle cx="22" cy="25" r="6.500" fill="#69707c" fill-opacity=".8" stroke="#d9dbde"/><path d="M0 23h3v3H0z" fill="#fff"/></svg><span class="mt-1">Inserir</span><svg class="mt-[2px] h-[3px] w-[5px] shrink-0"><use href="#dn"/></svg></button>
      <div class="grid grid-rows-3 pl-1">
        <button class="flex items-center gap-[5px]"><svg class="size-4"><use href="#bcreate"/></svg>Criar</button>
        <button class="flex items-center gap-[5px]"><svg class="size-4"><use href="#bedit"/></svg>Editar</button>
        <button class="flex items-center gap-[5px]"><svg class="size-4"><use href="#battr"/></svg>Editar atributos<svg class="ml-[3px] h-[3px] w-[5px]"><use href="#dn"/></svg></button>
      </div>
    </div>
    <button class="flex h-[22px] items-center justify-center gap-[6px]">Bloco<svg class="h-1 w-2"><use href="#dnl"/></svg></button>
  </section>

  <!-- Propriedades -->
  <section class="flex w-[284px] flex-col border-r border-[#252c36] pt-[5px]">
    <div class="flex h-[72px]">
      <button class="flex w-[82px] flex-col items-center pt-[3px]"><svg class="size-8 shrink-0" viewBox="0 0 32 32"><path d="M2 0h20v28H2z" fill="#d9dbde"/><path d="M4.500 2.500h13v10h-13z" fill="#8fcbf7" stroke="#39414e"/><path d="M4 18.500h14M4 23.500h10M8 16v5M12 21v5" stroke="#39414e"/><path d="M15 23l6-5 7 9-4 5z" fill="#f8d384"/><path d="M20 19l4-2 2 2 4-3 2 4-4 3 1 3-3 2z" fill="#fff"/></svg><span class="mt-[3px] leading-[15px]">Corresponder<br>propriedades</span></button>
      <div class="grid flex-1 grid-cols-[18px_180px] grid-rows-3 items-center pl-px">
        <svg class="size-4"><use href="#wheel"/></svg>
        <div class="relative h-[22px]"><select class="size-full appearance-none border border-[#2b323e] bg-[#4a566a] pl-[38px] text-xs" aria-label="Cor do objeto"><option>PorCamada</option></select><span class="pointer-events-none absolute inset-0 flex items-center pr-[2px] pl-3"><span class="size-4 border border-[#7d8ea6] bg-[#00ff00]"></span><svg class="ml-auto h-1 w-2"><use href="#dnl"/></svg></span></div>
        <svg class="size-4"><use href="#lw"/></svg>
        <div class="relative h-[22px]"><select class="size-full appearance-none border border-[#2b323e] bg-[#4a566a] pl-[69px] text-xs" aria-label="Espessura de linha"><option>PorCamada</option></select><span class="pointer-events-none absolute inset-0 flex items-center pr-[2px] pl-1"><span class="h-px w-16 bg-white"></span><svg class="ml-auto h-1 w-2"><use href="#dnl"/></svg></span></div>
        <svg class="size-4"><use href="#lt"/></svg>
        <div class="relative h-[22px]"><select class="size-full appearance-none border border-[#2b323e] bg-[#4a566a] pl-[69px] text-xs" aria-label="Tipo de linha"><option>PorCamada</option></select><span class="pointer-events-none absolute inset-0 flex items-center pr-[2px] pl-1"><span class="h-px w-16 bg-white"></span><svg class="ml-auto h-1 w-2"><use href="#dnl"/></svg></span></div>
      </div>
    </div>
    <div class="flex h-[22px] items-center"><button class="flex flex-1 items-center justify-center gap-[6px] pl-1">Propriedades<svg class="h-1 w-2"><use href="#dnl"/></svg></button><svg class="mr-1 size-[6px]"><use href="#launch"/></svg></div>
  </section>

  <!-- Grupos -->
  <section class="flex w-[69px] flex-col border-r border-[#252c36] pt-[5px]">
    <div class="flex h-[72px]">
      <button class="flex w-[42px] flex-col items-center pt-[3px]"><svg class="size-8 shrink-0" viewBox="0 0 32 32"><path d="M5 5.500H1.500v26H5M19 31.500h3.500V18" fill="none" stroke="#fff"/><path d="M7.500 9.500h9v7h-9z" fill="#3f6b91" stroke="#7fc4f5"/><circle cx="12" cy="24.500" r="4.500" fill="#69707c" stroke="#d9dbde"/><use href="#star" x="16" y="0" width="16" height="16"/></svg><span class="mt-[3px]">Grupo</span></button>
      <div class="grid w-6 grid-rows-3">
        <button class="flex items-center justify-center" aria-label="Desagrupar"><svg class="size-4"><use href="#ungrp"/></svg></button>
        <button class="flex items-center justify-center" aria-label="Editar grupo"><svg class="size-4"><use href="#gedit"/></svg></button>
        <button class="mt-px flex h-[22px] items-center justify-center border border-[#7fc4f5] bg-[#465e77]" aria-label="Seleção de grupo"><svg class="size-4"><use href="#gsel"/></svg></button>
      </div>
    </div>
    <button class="flex h-[22px] items-center justify-center gap-[6px]">Grupos<svg class="h-1 w-2"><use href="#dnl"/></svg></button>
  </section>

  <!-- Utilitários -->
  <section class="flex w-[92px] flex-col border-r border-[#252c36] pt-[5px]">
    <div class="flex h-[72px]">
      <button class="flex w-[67px] flex-col items-center pt-[3px]"><svg class="size-8 shrink-0" viewBox="0 0 32 32"><path d="M2 13h2v2h2v-2h2v2h2v-2h2v2h2v-2h2v2h2v-2h2v2h2v-2h2v2h2v-2h4v6H2z" fill="#f8d384"/></svg><span class="mt-[3px]">Medida</span><svg class="mt-[2px] h-[3px] w-[5px] shrink-0"><use href="#dn"/></svg></button>
      <div class="grid grid-rows-3 pl-[2px]">
        <button class="flex items-center" aria-label="Seleção rápida"><svg class="size-4"><use href="#qsel"/></svg></button>
        <button class="flex items-center" aria-label="Selecionar tudo"><svg class="size-4"><use href="#selall"/></svg></button>
        <button class="flex items-center" aria-label="Calculadora"><svg class="size-4"><use href="#calc"/></svg></button>
      </div>
    </div>
    <button class="flex h-[22px] items-center justify-center gap-[6px]">Utilitários<svg class="h-1 w-2"><use href="#dnl"/></svg></button>
  </section>

  <!-- Área de transferência -->
  <section class="flex w-[122px] flex-col border-r border-[#252c36] pt-[5px]">
    <div class="flex h-[72px]">
      <button class="flex w-[75px] flex-col items-center pt-[3px] pl-[22px]"><svg class="size-8 shrink-0" viewBox="0 0 32 32"><path d="M3 3h22v25H3z" fill="#d3a869"/><path d="M9 4V2h3V0h4v2h3v2z" fill="#fff"/><path d="M10 9h13v7h6v16H10z" fill="#d9dbde" stroke="#3b4453"/><path d="M24 10l5 5h-5z" fill="#fff"/></svg><span class="mt-[3px]">Colar</span><svg class="mt-[2px] h-[3px] w-[5px] shrink-0"><use href="#dn"/></svg></button>
      <div class="grid grid-rows-3 pl-1">
        <button class="flex items-center" aria-label="Recortar"><svg class="size-4"><use href="#cut"/></svg></button>
        <button class="flex items-center" aria-label="Copiar para área de transferência"><svg class="size-4"><use href="#copyc"/></svg></button>
      </div>
    </div>
    <div class="flex h-[22px] items-center justify-center">Área de transferência</div>
  </section>

  <!-- Vista -->
  <section class="flex flex-1 flex-col pt-[5px]">
    <div class="flex h-[72px]">
      <button class="flex w-[62px] flex-col items-center pt-[3px]"><svg class="size-8 shrink-0" viewBox="0 0 32 32"><path d="M0 4h13v10h19v14H0z" fill="#d9dbde"/></svg><span class="mt-[3px]">Base</span><svg class="mt-[2px] h-[3px] w-[5px] shrink-0"><use href="#dn"/></svg></button>
    </div>
    <div class="flex h-[22px] items-center gap-2 pl-[5px]"><button class="flex items-center gap-[6px]">Vista<svg class="h-1 w-2"><use href="#dnl"/></svg></button><svg class="size-[6px]"><use href="#launch"/></svg></div>
  </section>
</div>

<!-- Document tabs -->
<nav class="flex h-[26px] shrink-0 items-end pl-5" aria-label="Desenhos">
  <a href="#" class="relative flex h-[22px] w-[125px] items-center text-[#b4b9c0]"><svg class="absolute inset-0 size-full" viewBox="0 0 125 22" preserveAspectRatio="none"><path d="M-8 22C0 22 0 14 3 7 5 2 7 0 11 0h108c4 0 5 4 5 8v14z" fill="#2f3745"/></svg><span class="relative pl-3">Iniciar</span></a>
  <a href="#" class="relative flex h-[22px] w-[126px] items-center font-bold text-white"><svg class="absolute inset-0 size-full overflow-visible" viewBox="0 0 126 22" preserveAspectRatio="none"><path d="M-12 22C-4 22-4 14 0 7 2 2 4 0 8 0h106c4 0 6 2 7 7 2 8 4 15 14 15z" fill="#3b4453"/></svg><span class="relative pl-[10px]">Aula3*</span><svg class="relative mr-4 ml-auto size-[9px]" viewBox="0 0 9 9"><path d="M1 1l7 7M8 1L1 8" stroke="#b4b9c0" stroke-width="2"/></svg></a>
  <button class="mb-[3px] ml-1 flex h-[15px] w-[22px] items-center justify-center rounded-tr-xl rounded-bl-xl bg-[#343c49]" aria-label="Novo desenho"><svg class="size-2" viewBox="0 0 8 8"><path d="M4 0v8M0 4h8" stroke="#b4b9c0" stroke-width="2"/></svg></button>
</nav>

<!-- Work area -->
<div class="flex min-h-0 flex-1">
  <div class="relative min-w-0 flex-1 overflow-hidden border-t-4 border-b border-t-[#3b4453] border-b-[#454c56]">
    <svg class="absolute top-0 left-0 h-[826px] w-[1550px]" viewBox="0 177 1550 826" aria-label="Desenho">
      <g fill="none">
        <path d="M0 291L573 583L90 1003" stroke="#3a424a"/>
        <path d="M785 398L1040 177" stroke="#226b2a"/>
        <path d="M573 583L785 398" stroke="#1f8a28"/>
        <path d="M573 583L851 724" stroke="#6b5229"/>
        <path d="M851 724L1397 1003" stroke="#6b2930"/>
      </g>
      <g fill="none" shape-rendering="crispEdges">
        <path d="M785 398L1062 539L851 724" stroke="#00f000"/>
        <path d="M1090 449L1175 492" stroke="#ee8c8c"/>
        <path d="M1097 482L1161 425" stroke="#7cf07c"/>
        <path d="M1117.500 410V489" stroke="#8c8cf0"/>
        <path d="M1114.500 459.500h6v6h-6z" fill="#222931" stroke="#fff"/>
      </g>
      <g stroke-linecap="round">
        <path d="M577 581L602 558" stroke="#3f8f3f" stroke-width="5"/>
        <path d="M576 584L610 601" stroke="#c9686a" stroke-width="5"/><path d="M577 583.500L609 600" stroke="#f2c4c4" stroke-width="1.500"/>
      </g>
      <path d="M570 547h6v34l-3 3-3-3z" fill="#365a8c"/><circle cx="573" cy="547" r="2.500" fill="#b9cbe2"/>
      <g class="font-['Open_Sans'] text-lg font-light"><text x="571" y="543" fill="#2a6ce0">Z</text><text x="599" y="552" fill="#2aa82a">Y</text><text x="609" y="598" fill="#e03a3a">X</text></g>

      <!-- View cube -->
      <ellipse cx="1467" cy="308" rx="56" ry="40" fill="none" stroke="#474e56" stroke-width="13"/>
      <path d="M1463 245l38 17-3 36-27 25-36-21-2-34z" fill="#b0b2b5"/>
      <path d="M1463 245l38 17-29 26-39-20z" fill="#b9bbbe"/><path d="M1472 288l29-26-3 36-27 25z" fill="#a4a6aa"/>
      <path d="M1433 268l39 20 29-26M1472 288l-1 35" fill="none" stroke="#2d3239" stroke-dasharray="6 2"/>
      <path d="M1464 282l8-5 6 5-6 6z" fill="#98a3b3"/>
      <path d="M1501 275l3-2" stroke="#bcbec1" stroke-width="2"/>
      <g class="font-['Liberation_Sans'] font-bold" text-anchor="middle">
        <g fill="#50545b"><text transform="translate(1465 268) rotate(27)" class="text-[9px]">SUPERIOR</text><text transform="translate(1452 300) rotate(28)" class="text-[9px]">FRONTAL</text><text transform="translate(1488 297) rotate(-42)" class="text-[8px]">DIREITA</text></g>
        <g fill="#bcbec1" class="text-sm"><text x="1423" y="286">O</text><text transform="translate(1425 346) rotate(15)">S</text><text transform="translate(1513 336) rotate(25)">L</text></g>
      </g>
    </svg>
    <div class="flex justify-between pt-[6px] pl-[3px]"><span>[−][Vista personalizada][Raio X]</span>
      <div class="flex items-center gap-[10px] pt-[2px] pr-[11px]">
        <button aria-label="Minimizar vista"><svg class="size-[10px]" viewBox="0 0 10 10"><path d="M0 8h9" stroke="#fff" stroke-width="2"/></svg></button>
        <button aria-label="Restaurar vista"><svg class="size-[10px]" viewBox="0 0 10 10"><path d="M3 3V1h6v6H7M1 4h6v5H1z" fill="none" stroke="#fff" stroke-width="1.500"/></svg></button>
        <button aria-label="Fechar vista"><svg class="size-[10px]" viewBox="0 0 10 10"><path d="M1 1l8 8M9 1L1 9" stroke="#fff" stroke-width="2"/></svg></button>
      </div>
    </div>
    <button class="absolute top-[193px] right-[59px] flex h-[18px] w-12 items-center justify-center gap-1 rounded border border-[#a3a6b0] bg-[#898c98] font-['Liberation_Sans'] text-xs text-[#4d515c]">WCS<svg class="h-[5px] w-[9px]" viewBox="0 0 9 5"><path d="M0 0h9L4.500 5z" fill="#a9acb6" stroke="#c6c8cf" stroke-width=".6"/></svg></button>

    <!-- Command line -->
    <div class="absolute bottom-0 left-[316px] w-[918px] font-['DejaVu_Sans_Mono','Liberation_Mono',monospace]">
      <ul class="mb-[4px] flex flex-col items-start gap-[5px] pl-[62px] leading-[15px]">
        <li class="rounded-xs bg-[#505355] px-[2px] text-[#b4b7b9]">Comando: _u RECORTAT GRUPO</li>
        <li class="rounded-xs bg-[#555859] px-[2px] text-[#d4d6d7]">Comando: _u '.PAN23D</li>
        <li class="rounded-xs bg-[#5b5d5e] px-[2px] text-white">Comando: _u REGIAO</li>
      </ul>
      <div class="flex h-[27px] bg-[#2a313d] pb-px">
        <div class="flex w-14 items-center gap-[5px] pl-1"><svg class="h-[17px] w-[5px]" viewBox="0 0 5 17"><path d="M1 0v17M4 0v17" stroke="#b4b9c0" stroke-width="2" stroke-dasharray="2 1"/></svg>
          <button aria-label="Fechar linha de comando"><svg class="size-[10px]" viewBox="0 0 10 10"><path d="M1 1l8 8M9 1L1 9" stroke="#c4c6c9" stroke-width="2"/></svg></button>
          <button class="ml-[6px]" aria-label="Personalizar"><svg class="size-[14px]" viewBox="0 0 14 14"><path d="M1 13l7-7" stroke="#c4c6c9" stroke-width="2.500"/><path d="M9 0L7 2v4l2 2h3l2-3h-3L9 3z" fill="#c4c6c9"/></svg></button></div>
        <div class="flex flex-1 items-center rounded-xs bg-[#bcbdbf] pr-1 pl-1">
          <svg class="h-3 w-4" viewBox="0 0 16 12"><path d="M.5 .5h15v11H.5z" fill="none" stroke="#4a4d50"/><path d="M0 0h16v3H0z" fill="#4a4d50"/><path d="M2 5l2.500 2L2 9M6 9.500h4" fill="none" stroke="#4a4d50"/></svg>
          <svg class="ml-[3px] h-1 w-[7px]" viewBox="0 0 8 4"><path d="M0 0h8L4 4z" fill="#4a4d50"/></svg>
          <input class="ml-[6px] flex-1 text-xs italic placeholder:text-[#5f6264]" aria-label="Linha de comando" placeholder="Digite um comando">
          <svg class="h-1 w-[7px]" viewBox="0 0 8 4"><path d="M0 4h8L4 0z" fill="#4a4d50"/></svg>
        </div>
      </div>
    </div>
  </div>

  <!-- Layer manager palette -->
  <aside class="flex w-[370px] shrink-0 flex-col bg-[#3b4453] pt-[5px] pl-[3px]">
    <h2 class="flex h-[21px] shrink-0 items-center gap-[6px] rounded-t-md bg-[#303847] pl-[5px]"><svg class="h-[10px] w-[3px]" viewBox="0 0 3 10"><path d="M.5 0v10M2.500 0v10" stroke="#9aa0a9" stroke-dasharray="1 1"/></svg>GERENCIADOR DE PROPRIEDADES DE CAMADA</h2>
    <div class="flex h-[31px] shrink-0 items-start pl-1"><span class="pt-[10px]">Camada atual: C</span>
      <span class="mt-[7px] ml-auto flex h-4 w-[125px] items-center bg-[#4a566a] pr-px"><input class="w-0 flex-1 text-xs placeholder:text-[#b9bec6]" aria-label="Pesquisar camada" placeholder="Pesquisar camada"><svg class="size-3"><use href="#mag"/></svg></span></div>
    <div class="flex h-[21px] shrink-0 items-center gap-[7px] pr-[9px] pb-px pl-px">
      <svg class="h-4 w-[17px]"><use href="#ffilter"/></svg><svg class="size-4"><use href="#folder"/></svg><span class="h-[18px] w-px bg-[#7b828e]"></span><svg class="size-4"><use href="#lostate"/></svg><svg class="ml-[3px] size-4"><use href="#lothaw"/></svg><svg class="size-4"><use href="#losnow"/></svg><svg class="size-4"><use href="#lodel"/></svg><svg class="size-4"><use href="#loset"/></svg>
      <svg class="ml-auto size-4"><use href="#refresh"/></svg><svg class="size-4"><use href="#apply"/></svg><svg class="size-4"><use href="#gear"/></svg>
    </div>
    <div class="flex min-h-0 flex-1">
      <div class="mr-1 flex w-[25px] flex-col items-end justify-between border-r border-b border-[#2b323e] px-[3px] pt-[6px] pb-1"><button aria-label="Expandir árvore"><svg class="h-[10px] w-3"><use href="#chev"/></svg></button><button aria-label="Expandir filtros"><svg class="h-[10px] w-3"><use href="#chev"/></svg></button></div>
      <div class="flex min-w-0 flex-1 flex-col">
        <div class="relative min-h-0 flex-1 overflow-hidden">
          <table class="w-full table-fixed border-collapse text-left">
            <colgroup><col class="w-[18px]"><col><col class="w-[18px]"><col class="w-[18px]"><col class="w-[18px]"><col class="w-[18px]"><col class="w-[48px]"><col class="w-2"></colgroup>
            <thead><tr class="h-[23px] bg-[#454f62] *:border-r *:border-[#2f3744] *:font-normal"><th class="overflow-hidden pl-1">S..</th><th class="pl-1"><span class="flex items-center justify-between pr-[2px]">Nome<svg class="h-1 w-[7px]" viewBox="0 0 8 4"><path d="M0 4h8L4 0z" fill="#eceef0"/></svg></span></th><th class="overflow-hidden pl-1">A.</th><th class="overflow-hidden pl-1">C.</th><th class="overflow-hidden pl-1">B..</th><th class="overflow-hidden pl-1">P..</th><th class="pl-1">Cor</th><th class="overflow-hidden pl-1 text-[#6a78d0]">T</th></tr></thead>
            <tbody>
              <tr class="h-[18px]"><td><svg class="ml-px h-[14px] w-4"><use href="#chip"/></svg></td><td class="pl-[3px]">0</td><td><svg class="mx-auto size-[13px]"><use href="#bulb"/></svg></td><td><svg class="mx-auto size-[14px]"><use href="#sun"/></svg></td><td><svg class="mx-auto size-3"><use href="#unlock"/></svg></td><td><svg class="mx-auto size-3"><use href="#prn"/></svg></td><td><span class="flex items-center gap-1 pl-1"><span class="size-3 border border-black bg-white"></span>br...</span></td><td class="overflow-hidden pl-[3px]">C</td></tr>
              <tr class="h-[18px]"><td><svg class="ml-px h-[14px] w-4"><use href="#chip"/></svg></td><td class="pl-[3px]">A - CUBO</td><td><svg class="mx-auto size-[13px]"><use href="#bulb"/></svg></td><td><svg class="mx-auto size-[14px]"><use href="#snow"/></svg></td><td><svg class="mx-auto size-3"><use href="#unlock"/></svg></td><td><svg class="mx-auto size-3"><use href="#prn"/></svg></td><td><span class="flex items-center gap-1 pl-1"><span class="size-3 border border-black bg-[#ff0000]"></span>ver...</span></td><td class="overflow-hidden pl-[3px]">C</td></tr>
              <tr class="h-[18px]"><td><svg class="ml-px h-[14px] w-4"><use href="#chip"/></svg></td><td class="pl-[3px]">B - ISOCAEDRO</td><td><svg class="mx-auto size-[13px]"><use href="#bulb"/></svg></td><td><svg class="mx-auto size-[14px]"><use href="#snow"/></svg></td><td><svg class="mx-auto size-3"><use href="#unlock"/></svg></td><td><svg class="mx-auto size-3"><use href="#prn"/></svg></td><td><span class="flex items-center gap-1 pl-1"><span class="size-3 border border-black bg-[#ffff00]"></span>am...</span></td><td class="overflow-hidden pl-[3px]">C</td></tr>
              <tr class="h-[18px] bg-[#7588a6]"><td><svg class="ml-px h-[14px] w-4"><use href="#tick"/></svg></td><td class="pl-[3px]">C - OCTAEDRO</td><td><svg class="mx-auto size-[13px]"><use href="#bulb"/></svg></td><td><svg class="mx-auto size-[14px]"><use href="#sun"/></svg></td><td><svg class="mx-auto size-3"><use href="#unlock"/></svg></td><td><svg class="mx-auto size-3"><use href="#prn"/></svg></td><td><span class="flex items-center gap-1 pl-1"><span class="size-3 border border-black bg-[#00ff00]"></span>ver...</span></td><td class="overflow-hidden pl-[3px]">C</td></tr>
              <tr class="h-[18px]"><td><svg class="ml-px h-[14px] w-4"><use href="#chip"/></svg></td><td class="pl-[3px]">D</td><td><svg class="mx-auto size-[13px]"><use href="#bulb"/></svg></td><td><svg class="mx-auto size-[14px]"><use href="#sun"/></svg></td><td><svg class="mx-auto size-3"><use href="#unlock"/></svg></td><td><svg class="mx-auto size-3"><use href="#prn"/></svg></td><td><span class="flex items-center gap-1 pl-1"><span class="size-3 border border-black bg-white"></span>br...</span></td><td class="overflow-hidden pl-[3px]">C</td></tr>
              <tr class="h-[18px]"><td><svg class="ml-px h-[14px] w-4"><use href="#chip"/></svg></td><td class="pl-[3px]">E</td><td><svg class="mx-auto size-[13px]"><use href="#bulb"/></svg></td><td><svg class="mx-auto size-[14px]"><use href="#sun"/></svg></td><td><svg class="mx-auto size-3"><use href="#unlock"/></svg></td><td><svg class="mx-auto size-3"><use href="#prn"/></svg></td><td><span class="flex items-center gap-1 pl-1"><span class="size-3 border border-black bg-white"></span>br...</span></td><td class="overflow-hidden pl-[3px]">C</td></tr>
            </tbody>
          </table>
          <span class="absolute inset-y-0 right-[128px] w-[2px] bg-[#2b323e]"></span>
        </div>
        <div class="mr-px flex h-[17px] items-center bg-[#efefef] pl-[17px]"><span class="h-[2px] w-[71px] bg-[#858585]"></span></div>
      </div>
    </div>
    <footer class="flex h-[41px] shrink-0 items-center pt-2"><svg class="size-4" viewBox="0 0 16 16"><path d="M0 1h5l1 1.500h6V7H8l-1 6H0z" fill="#d9dbde"/><path d="M12 4l-5 7h3l-2 5 7-7h-3z" fill="#f8d384"/></svg><svg class="ml-[3px] h-1 w-[7px]"><use href="#dnl"/></svg><span class="ml-[7px]">Todos: 6 camadas exibidas de 6 camadas totais</span></footer>
  </aside>
</div>

<!-- Layout tabs and status bar -->
<footer class="flex h-[25px] shrink-0">
  <nav class="flex items-start pl-[10px] text-[#b4b9c0]" aria-label="Layouts">
    <a href="#" class="flex h-[17px] w-[67px] items-center justify-center rounded-b-lg bg-[#3b4453] font-bold text-white">Modelo</a>
    <a href="#" class="ml-px flex h-[17px] w-[62px] items-center justify-center rounded-b-lg bg-[#2d3542]">Layout1</a>
    <a href="#" class="ml-[3px] flex h-[17px] w-[62px] items-center justify-center rounded-b-lg bg-[#2d3542]">Layout2</a>
    <button class="ml-[6px] flex h-4 w-[22px] items-center justify-center rounded-tl-xl rounded-br-xl bg-[#2d3542]" aria-label="Novo layout"><svg class="size-2" viewBox="0 0 8 8"><path d="M4 0v8M0 4h8" stroke="#b4b9c0" stroke-width="2"/></svg></button>
  </nav>
  <div class="ml-auto flex gap-[3px] border-t border-[#454c56]">
    <button class="w-14 bg-[#3b4453]">MODELO</button>
    <div class="flex bg-[#3b4453]">
      <button class="flex w-[22px] items-center justify-center bg-[#5f8fc6]" aria-label="Grade"><svg class="size-4" viewBox="0 0 16 16"><path d="M4.500 0v16M8.500 0v16M12.500 0v16M0 4.500h16M0 8.500h16M0 12.500h16" stroke="#fff"/></svg></button>
      <button class="flex w-6 items-center justify-center" aria-label="Snap"><svg class="size-[14px]" viewBox="0 0 14 14"><path d="M0 1h14M0 5h14M0 9h14M0 13h14" stroke="#d9dbde" stroke-width="2" stroke-dasharray="2 2"/></svg></button>
      <button class="flex w-[17px] items-center justify-center" aria-label="Opções de snap"><svg class="h-1 w-2"><use href="#dnl"/></svg></button>
    </div>
    <div class="flex bg-[#3b4453]">
      <button class="flex w-[23px] items-center justify-center bg-[#5f8fc6]" aria-label="Entrada dinâmica"><svg class="size-4" viewBox="0 0 16 16"><path d="M3.500 1v6M0 4.500h7" stroke="#fff"/><path d="M6 9h10v5H6z" fill="#fff"/></svg></button>
      <button class="flex w-7 items-center justify-center" aria-label="Ortogonal"><svg class="size-4" viewBox="0 0 16 16"><path d="M.5 0v15.500H16M.5 10.500h5v5" fill="none" stroke="#d9dbde"/></svg></button>
      <button class="flex w-[21px] items-center justify-center" aria-label="Polar"><svg class="size-4" viewBox="0 0 16 16"><circle cx="7" cy="9" r="6" fill="none" stroke="#d9dbde"/><path d="M7 9l6-7M7 9h9" stroke="#d9dbde"/></svg></button>
      <button class="flex w-[18px] items-center justify-center" aria-label="Opções polar"><svg class="h-1 w-2"><use href="#dnl"/></svg></button>
      <button class="flex w-[22px] items-center justify-center" aria-label="Isométrico"><svg class="size-4" viewBox="0 0 16 16"><path d="M2 2l12 12" stroke="#e0605e"/><path d="M8.500 0v16" stroke="#5fd08f"/><path d="M7.500 7.500h2v2h-2z" fill="#3b4453" stroke="#fff"/></svg></button>
      <button class="flex w-[18px] items-center justify-center" aria-label="Opções isométrico"><svg class="h-1 w-2"><use href="#dnl"/></svg></button>
      <button class="mr-[3px] flex w-[22px] items-center justify-center bg-[#5f8fc6]" aria-label="Rastreamento"><svg class="size-4" viewBox="0 0 16 16"><path d="M14 1L1 14.500h15" fill="none" stroke="#fff"/><path d="M5 8h4v4" fill="none" stroke="#fff" stroke-dasharray="2 1"/></svg></button>
      <button class="flex w-[23px] items-center justify-center bg-[#5f8fc6]" aria-label="Snap a objetos"><svg class="size-4" viewBox="0 0 16 16"><path d="M3.500 3.500h12v12h-12z" fill="none" stroke="#fff"/><path d="M.5 .5h5v5h-5z" fill="#5f8fc6" stroke="#fff"/></svg></button>
      <button class="flex w-4 items-center justify-center" aria-label="Opções de snap a objetos"><svg class="h-1 w-2"><use href="#dnl"/></svg></button>
    </div>
    <div class="flex bg-[#3b4453]">
      <button class="flex w-[22px] items-center justify-center bg-[#5f8fc6]" aria-label="Visibilidade de anotação"><svg class="size-4" viewBox="0 0 16 16"><use href="#anno" width="14"/><circle cx="13" cy="3.500" r="2.500" fill="none" stroke="#fff"/></svg></button>
      <button class="flex w-[26px] items-center justify-center" aria-label="Escala automática"><svg class="size-4" viewBox="0 0 16 16"><use href="#anno" width="14"/><path d="M13 0l-3 4h2l-1 4 4-5h-2z" fill="#d9dbde"/></svg></button>
      <button class="flex w-[22px] items-center justify-center" aria-label="Escala da anotação"><svg class="size-[14px]"><use href="#anno"/></svg></button>
      <button class="flex w-9 items-center justify-center gap-1">1:1<svg class="h-1 w-2"><use href="#dnl"/></svg></button>
    </div>
    <div class="flex bg-[#3b4453]">
      <button class="flex w-[37px] items-center justify-center gap-[9px]" aria-label="Espaço de trabalho"><svg class="size-[15px]"><use href="#gear"/></svg><svg class="h-1 w-2"><use href="#dnl"/></svg></button>
    </div>
    <button class="flex w-[25px] items-center justify-center bg-[#3b4453]" aria-label="Monitor"><svg class="size-4" viewBox="0 0 16 16"><path d="M8 0v16M0 8h16" stroke="#e6e8ea" stroke-width="2"/></svg></button>
    <button class="flex w-[25px] items-center justify-center bg-[#3b4453]" aria-label="Isolar objetos"><svg class="size-4" viewBox="0 0 16 16"><g fill="none" stroke="#d9dbde"><path d="M.5 .5h6v6h-6zM8 10l3 5.500H5z"/><circle cx="13" cy="7" r="2.500"/></g></svg></button>
    <button class="flex w-7 items-center justify-center bg-[#3b4453]" aria-label="Desempenho gráfico"><svg class="size-4" viewBox="0 0 16 16"><path d="M0 0h16v12H0z" fill="#d9dbde"/><path d="M1 9l3-6 4 6 4-6 3 5" fill="none" stroke="#39414e"/><path d="M12 8l4 8H8z" fill="#f2a77c"/></svg></button>
    <button class="flex w-6 items-center justify-center bg-[#3b4453]" aria-label="Tela limpa"><svg class="size-4" viewBox="0 0 16 16"><path d="M.5 2.500h15v11H.5z" fill="none" stroke="#e6e8ea"/><path d="M9 5h4v4zM3 7v4h4z" fill="#e6e8ea"/></svg></button>
    <button class="flex w-6 items-center justify-center bg-[#3b4453]" aria-label="Personalização"><svg class="size-4" viewBox="0 0 16 16"><path d="M0 2h16M0 8h16M0 14h16" stroke="#e6e8ea" stroke-width="2"/></svg></button>
  </div>
</footer>
</main>
</body>
</html>
